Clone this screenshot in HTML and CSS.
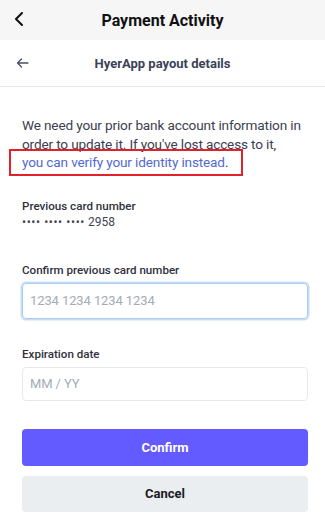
FILE: index.html
```html
<!DOCTYPE html>
<html>
<head>
<meta charset="utf-8">
<link rel="stylesheet" href="styles.css">
</head>
<body>
<div class="topbar">
  <svg class="chev" width="10" height="14" viewBox="0 0 10 14"><path d="M8 1 L2 7 L8 13" fill="none" stroke="#111" stroke-width="2" stroke-linecap="round" stroke-linejoin="round"/></svg>
  <div class="top-title">Payment Activity</div>
</div>
<div class="subbar">
  <svg class="arrow" width="13" height="10" viewBox="0 0 13 10"><path d="M12 5 H1.5 M5.5 1 L1.5 5 L5.5 9" fill="none" stroke="#4a5168" stroke-width="1.3" stroke-linecap="round" stroke-linejoin="round"/></svg>
  <div class="sub-title">HyerApp payout details</div>
</div>
<main class="content">
  <p class="intro">We need your prior bank account information in order to update it. If you've lost access to it, <span class="link-wrap"><a class="link">you can verify your identity instead</a>.<span class="highlight"></span></span></p>
  <div class="prev">
    <div class="label">Previous card number</div>
    <div class="masked"><span class="dots">•••• •••• ••••</span> 2958</div>
  </div>
  <div class="field">
    <div class="label">Confirm previous card number</div>
    <div class="input focused">1234 1234 1234 1234</div>
  </div>
  <div class="field">
    <div class="label">Expiration date</div>
    <div class="input short">MM / YY</div>
  </div>
  <div class="buttons">
    <div class="btn primary">Confirm</div>
    <div class="btn secondary">Cancel</div>
  </div>
</main>
</body>
</html>
```
FILE: styles.css
```css
* { box-sizing: border-box; }
body {
  margin: 0;
  width: 325px;
  height: 520px;
  overflow: hidden;
  background: #fff;
  font-family: Roboto, "Noto Sans", sans-serif;
  color: #30313d;
}
.topbar {
  height: 40px;
  background: #f6f6f6;
  display: flex;
  align-items: center;
  justify-content: center;
  position: relative;
}
.chev { position: absolute; left: 14px; top: 12px; }
.top-title {
  font-size: 16px;
  font-weight: 700;
  color: #111;
}
.subbar {
  height: 47px;
  border-bottom: 1px solid #e7e9ee;
  display: flex;
  align-items: center;
  justify-content: center;
  position: relative;
}
.arrow { position: absolute; left: 16px; top: 18px; }
.sub-title {
  font-size: 13px;
  font-weight: 700;
  color: #3c4257;
}
.content {
  padding: 0 17px 0 22px;
}
.intro {
  margin: 29px 0 0;
  font-size: 13.6px;
  line-height: 18.5px;
  color: #3c4050;
  letter-spacing: -0.15px;
}
.link-wrap { position: relative; display: inline-block; }
.link { color: #5469d4; }
.highlight {
  position: absolute;
  left: -13px;
  top: -4px;
  width: 234px;
  height: 27px;
  border: 2px solid #e2222a;
}
.prev { margin-top: 26px; }
.label {
  font-size: 11.6px;
  line-height: 16px;
  font-weight: 500;
  color: #30313d;
}
.masked {
  font-size: 12px;
  line-height: 16px;
  color: #414552;
}
.dots { letter-spacing: 0.6px; }
.field { margin-top: 32px; }
.field + .field { margin-top: 27px; }
.input {
  margin-top: 5px;
  height: 36px;
  border: 1px solid #e6e8eb;
  border-radius: 4px;
  display: flex;
  align-items: center;
  padding-left: 7px;
  font-size: 13px;
  color: #a3acb9;
  letter-spacing: -0.1px;
}
.input.short { height: 34px; }
.input.focused {
  border: 1px solid #a8cdef;
  box-shadow: 0 0 0 1.5px #c6def5;
}
.buttons {
  margin-top: 28px;
  display: flex;
  flex-direction: column;
  gap: 10px;
}
.btn {
  height: 37px;
  border-radius: 4px;
  display: flex;
  align-items: center;
  justify-content: center;
  font-size: 13px;
  font-weight: 700;
}
.primary { background: #635bff; color: #fff; }
.secondary { background: #ebeef1; color: #1a1b25; height: 36px; }
```
